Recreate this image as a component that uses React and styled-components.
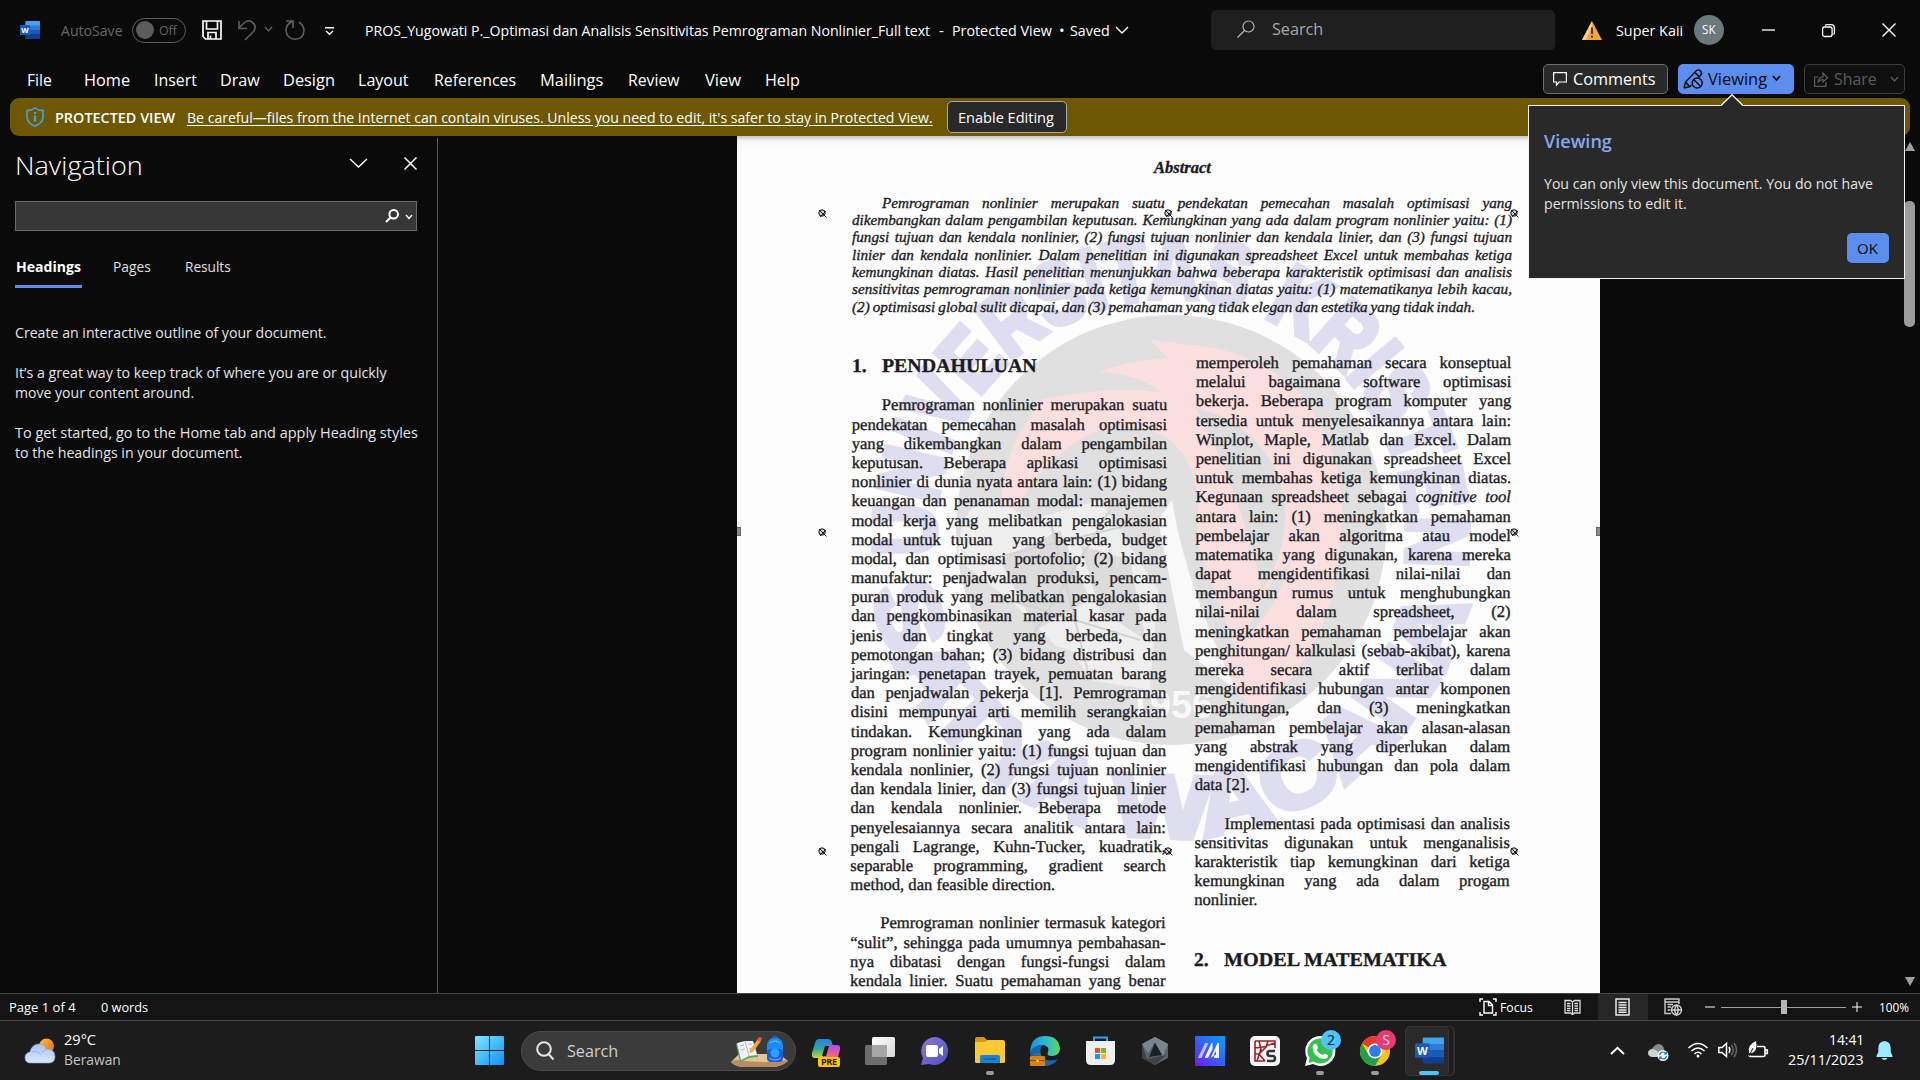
import React, { useLayoutEffect, useRef, useState } from "react";
import styled, { createGlobalStyle } from "styled-components";

const Global = createGlobalStyle`
  html, body { margin: 0; background: #0a0a0a; overflow: hidden; }
  * { box-sizing: border-box; }
`;

const sans = `"Open Sans", "Noto Sans", sans-serif`;
const serif = `"Liberation Serif", serif`;

/* ---------- text helpers ---------- */

const FitBox = styled.span`
  display: block;
  flex: none;
  width: ${(p) => p.$w}px;
  margin-left: ${(p) => p.$ml || 0}px;
  font-size: ${(p) => p.$size || 15}px;
  font-weight: ${(p) => p.$weight || 400};
  color: ${(p) => p.$color || "inherit"};
  text-decoration: ${(p) => (p.$underline ? "underline" : "none")};
  text-underline-offset: 2px;
  white-space: nowrap;
`;
const FitInner = styled.span`
  display: inline-block;
  transform-origin: 0 50%;
  text-decoration: inherit;
`;

function Fit({ w, ml, size, weight, color, underline, children }) {
  const ref = useRef(null);
  const [k, setK] = useState(1);
  useLayoutEffect(() => {
    setK(w / ref.current.offsetWidth);
  }, [w]);
  return (
    <FitBox $w={w} $ml={ml} $size={size} $weight={weight} $color={color} $underline={underline}>
      <FitInner ref={ref} style={{ transform: `scaleX(${k})` }}>{children}</FitInner>
    </FitBox>
  );
}

const LineBox = styled.div`
  height: ${(p) => p.$h}px;
  line-height: ${(p) => p.$h}px;
  padding-left: ${(p) => p.$indent || 0}px;
  white-space: pre;
`;

function Line({ width, h, indent = 0, text, children }) {
  const ref = useRef(null);
  const [ws, setWs] = useState(0);
  useLayoutEffect(() => {
    const gaps = text.split(" ").length - 1;
    const natural = ref.current.getBoundingClientRect().width;
    if (gaps > 0) setWs((width - indent - natural) / gaps);
  }, []);
  return (
    <LineBox $h={h} $indent={indent}>
      <span ref={ref} style={{ wordSpacing: `${ws}px` }}>{children || text}</span>
    </LineBox>
  );
}

const Svg = styled.svg`
  display: block;
  flex: none;
  overflow: visible;
  margin-left: ${(p) => p.$ml || 0}px;
  margin-top: ${(p) => p.$mt || 0}px;
`;
function Icon({ w, h = w, ml, mt, color = "#fff", sw = 1.4, children }) {
  return (
    <Svg width={w} height={h} viewBox={`0 0 ${w} ${h}`} $ml={ml} $mt={mt} fill="none" stroke={color} strokeWidth={sw}>
      {children}
    </Svg>
  );
}

/* ---------- shell ---------- */

const Window = styled.div`
  width: 1920px;
  height: 1080px;
  display: flex;
  flex-direction: column;
  position: relative;
  overflow: hidden;
  background: #0a0a0a;
  color: #fff;
  font-family: ${sans};
  line-height: 20px;
`;
const TitleBar = styled.header`
  display: flex;
  align-items: center;
  height: 60px;
  flex: none;
  padding-left: 20px;
`;
const Toggle = styled.div`
  display: flex;
  align-items: center;
  width: 54px;
  height: 25px;
  margin-left: 9px;
  border: 1.5px solid #5c5c5c;
  border-radius: 13px;
  padding-left: 3px;
`;
const Knob = styled.div`
  width: 18px;
  height: 18px;
  border-radius: 50%;
  background: #5c5c5c;
`;
const SearchField = styled.div`
  display: flex;
  align-items: center;
  width: 344px;
  height: 40px;
  margin-left: 83px;
  padding-left: 26px;
  padding-bottom: 2px;
  border-radius: 5px;
  background: #1f1f1f;
`;
const Avatar = styled.div`
  display: flex;
  align-items: center;
  width: 30px;
  height: 30px;
  margin-left: 11px;
  border-radius: 50%;
  background: #69797e;
`;
const RibbonRow = styled.nav`
  display: flex;
  align-items: center;
  height: 38px;
  flex: none;
`;
const MenuItem = styled.div`
  padding-top: 2px;
`;
const RibbonButton = styled.div`
  display: flex;
  align-items: center;
  width: ${(p) => p.$w}px;
  height: 30px;
  margin-left: ${(p) => p.$ml}px;
  border-radius: 5px;
  border: 1px solid ${(p) => p.$border};
  background: ${(p) => p.$bg};
  color: ${(p) => p.$color};
`;
const WarningBar = styled.div`
  display: flex;
  align-items: center;
  height: 38px;
  flex: none;
  margin: 0 10px;
  padding-left: 16px;
  border-radius: 9px;
  background: #6d5700;
  position: relative;
  z-index: 1;
`;
const EnableButton = styled.div`
  display: flex;
  align-items: center;
  width: 120px;
  height: 32px;
  margin-left: 14px;
  padding-left: 10px;
  border: 1px solid #a8a8a8;
  border-radius: 5px;
  background: #292929;
`;

/* ---------- workspace ---------- */

const Workspace = styled.main`
  display: flex;
  height: 857px;
  flex: none;
`;
const NavPane = styled.aside`
  width: 438px;
  height: 855px;
  margin-top: 2px;
  flex: none;
  border-right: 1px solid #5a5a5a;
  padding: 13px 0 0 15px;
`;
const PaneHead = styled.div`
  display: flex;
  align-items: center;
  height: 28px;
`;
const PaneSearch = styled.div`
  display: flex;
  align-items: center;
  width: 402px;
  height: 30px;
  margin-top: 22px;
  padding-left: 369px;
  border: 1px solid #6b6b6b;
  background: #363636;
`;
const PaneTabs = styled.div`
  display: flex;
  align-items: flex-start;
  margin-top: 26px;
  height: 31px;
  color: #e0e0e0;
`;
const PaneTab = styled.div`
  height: 31px;
  margin-left: ${(p) => p.$ml || 0}px;
  padding: 0 1px;
  border-bottom: 3px solid ${(p) => (p.$active ? "#5b8def" : "transparent")};
  color: ${(p) => (p.$active ? "#fff" : "inherit")};
`;
const PaneText = styled.div`
  margin-top: ${(p) => p.$mt}px;
  color: #e4e4e4;
`;
const Canvas = styled.section`
  flex: 1;
  display: flex;
  padding-left: 298.5px;
`;
const Page = styled.article`
  position: relative;
  width: 863px;
  height: 857px;
  flex: none;
  overflow: hidden;
  padding: 22px 0 0 115.5px;
  background: linear-gradient(#c4c4c4, #f6f6f6 5px, #fdfdfd 12px, #fdfdfd);
  color: #1b1b1f;
  font-family: ${serif};
  -webkit-text-stroke: 0.35px #1b1b1f;
`;
const AbstractTitle = styled.h2`
  position: relative;
  margin: 0 0 15.6px 302px;
  font: italic 700 16px/20px ${serif};
`;
const AbstractText = styled.div`
  position: relative;
  width: 660px;
  font-style: italic;
  font-size: 15.2px;
`;
const Columns = styled.div`
  position: relative;
  display: flex;
  gap: 28.5px;
  margin-top: 37.8px;
  transform: skewX(-0.18deg);
  transform-origin: 0 0;
`;
const Column = styled.div`
  width: 315.5px;
  font-size: 16.6px;
`;
const Heading = styled.h3`
  display: flex;
  height: 24px;
  margin: ${(p) => p.$top}px 0 17px;
  font: 700 19.5px/24px ${serif};
`;
const Gap = styled.div`
  height: 19.2px;
`;
const Seal = styled.svg`
  position: absolute;
  left: 0;
  top: 0;
`;
const Mark = styled.svg`
  position: absolute;
  left: ${(p) => p.$x}px;
  top: ${(p) => p.$y}px;
`;
const Handle = styled.i`
  position: absolute;
  top: 391px;
  left: ${(p) => p.$x}px;
  width: 5px;
  height: 9px;
  background: #8a8a8a;
  border: 1px solid #666;
`;
const ScrollBar = styled.div`
  margin-left: auto;
  width: 21px;
  display: flex;
  flex-direction: column;
  align-items: center;
  padding-top: 6px;
`;
const ScrollThumb = styled.div`
  width: 11px;
  height: 126px;
  margin: 50px 0 650px 0;
  border-radius: 5px;
  background: #9b9b9b;
`;

/* ---------- popup ---------- */

const Popup = styled.div`
  position: absolute;
  z-index: 3;
  left: 1528px;
  top: 105px;
  width: 377px;
  height: 174px;
  padding: 25px 0 0 15px;
  border: 1.5px solid #f2f2f2;
  background: #292929;
`;
const PopupArrow = styled.svg`
  position: absolute;
  left: 192px;
  top: -12px;
`;
const OkButton = styled.div`
  width: 42px;
  height: 30px;
  margin: 20px 0 0 303px;
  padding: 5px 0 0 10px;
  border-radius: 5px;
  background: #5b8def;
  color: #0a0a0a;
`;

/* ---------- bottom bars ---------- */

const StatusBar = styled.footer`
  display: flex;
  align-items: center;
  height: 28px;
  flex: none;
  padding-left: 9px;
  background: #141414;
  border-top: 1px solid #474747;
  border-bottom: 1px solid #474747;
`;
const ActiveView = styled.div`
  display: flex;
  align-items: center;
  width: 50px;
  height: 26px;
  margin-left: 17px;
  padding-left: 17px;
  background: #262626;
`;
const Slider = styled.div`
  display: flex;
  align-items: center;
  width: 125px;
  height: 14px;
  margin-left: 6px;
  background: linear-gradient(#a0a0a0, #a0a0a0) 0 50% / 100% 1px no-repeat;
`;
const SliderThumb = styled.div`
  width: 6px;
  height: 14px;
  margin-left: 60px;
  background: #b5b5b5;
`;
const TaskBar = styled.div`
  display: flex;
  align-items: center;
  height: 59px;
  flex: none;
  padding-left: 25px;
  background: #1c1c1c;
`;
const Stack = styled.div`
  display: flex;
  flex-direction: column;
  padding-bottom: 4px;
  margin-left: ${(p) => p.$ml}px;
`;
const TaskSearch = styled.div`
  display: flex;
  align-items: center;
  width: 275px;
  height: 40px;
  margin-left: 17px;
  padding-left: 14px;
  border-radius: 20px;
  background: #3b3b3b;
  border: 1px solid #4c4c4c;
`;
const TaskButton = styled.div`
  position: relative;
  display: flex;
  align-items: center;
  justify-content: center;
  width: 30px;
  height: 50px;
  flex: none;
  margin-left: ${(p) => p.$ml || 25}px;
  &::after {
    content: "";
    display: ${(p) => (p.$running ? "block" : "none")};
    position: absolute;
    bottom: 1px;
    left: 11px;
    width: 8px;
    height: 4px;
    border-radius: 2px;
    background: #9a9a9a;
  }
`;
const Badge = styled.span`
  position: absolute;
  left: 16px;
  top: 4px;
  width: 20px;
  height: 20px;
  border-radius: 50%;
  background: ${(p) => p.$bg};
  color: ${(p) => p.$color};
  font: 400 14px/20px ${sans};
  text-align: center;
`;
const WordTile = styled.div`
  display: flex;
  align-items: center;
  flex-direction: column;
  width: 44px;
  height: 50px;
  flex: none;
  margin-left: 15px;
  padding: 9px 0 0 4px;
  border: 1px solid #363636;
  border-radius: 5px;
  background: #2a2a2a;
  box-shadow: 5px 0 0 -1px #1c1c1c, 6px 0 0 0 #303030;
`;
const ActiveDot = styled.div`
  width: 20px;
  height: 4px;
  margin-top: 6px;
  border-radius: 2px;
  background: #4cc2ff;
`;

/* ---------- drawings ---------- */

function WordLogo({ s, ml }) {
  return (
    <Svg width={s} height={s} viewBox="0 0 30 30" $ml={ml}>
      <path d="M8 2.5Q8 1.5 9 1.5H29Q30 1.5 30 2.5V9H8Z" fill="#41a5ee" />
      <path d="M8 8.3H30V15H8Z" fill="#2b7cd3" />
      <path d="M8 15H30V22H8Z" fill="#185abd" />
      <path d="M8 21.7H30V27.5Q30 28.5 29 28.5H9Q8 28.5 8 27.5Z" fill="#103f91" />
      <rect x="0" y="7.5" width="15" height="15" rx="1.3" fill="#185abd" />
      <text x="7.5" y="19.2" textAnchor="middle" fontFamily={sans} fontSize="11.5" fontWeight="700" fill="#fff">W</text>
    </Svg>
  );
}
const Chevron = ({ w = 8, h = 4, ml, mt, color, sw }) => (
  <Icon w={w} h={h} ml={ml} mt={mt} color={color} sw={sw}><path d={`M0 0L${w / 2} ${h}L${w} 0`} /></Icon>
);
const NoAnchor = ({ x, y }) => (
  <Mark $x={x} $y={y} width="9" height="9" viewBox="0 0 9 9" fill="none" stroke="#111">
    <circle cx="4" cy="4" r="3.2" fill="#ccc" />
    <path d="M1 1L8.5 8.5M2 8L8 2" strokeWidth=".9" />
  </Mark>
);

function SealDrawing() {
  return (
    <Seal width="863" height="857" viewBox="737 136 863 857" stroke="none">
      <defs>
        <path id="ringTop" d="M 936 556 A 236 236 0 1 1 1406 556" />
        <path id="ringLow" d="M 872 592 A 305 305 0 0 0 1470 592" />
        <clipPath id="disc"><circle cx="1171" cy="530" r="215" /></clipPath>
      </defs>
      <circle cx="1171" cy="530" r="215" fill="#e0e0e0" />
      <g clipPath="url(#disc)">
        <path d="M1098 372Q1130 360 1168 358L1150 340L1215 348Q1290 366 1318 420Q1352 480 1338 560Q1330 650 1258 712L1210 668Q1270 630 1292 560Q1250 600 1240 660L1196 540Q1206 470 1170 440Q1120 410 1070 446Q1030 476 1012 520Q990 500 1016 440L1040 400Q1100 386 1160 392Q1140 374 1098 372Z" fill="#fbdfdf" />
        <path d="M1196 408Q1250 420 1276 470Q1300 530 1262 590Q1240 490 1196 408Z" fill="#dedede" />
        <path d="M1172 500Q1184 580 1236 690L1184 650Q1170 580 1158 520Z" fill="#f9f9f9" />
        <path d="M958 560Q960 470 1030 520L1100 500L1158 590L1150 690L1090 680L1010 600Z" fill="#efefef" />
        <path d="M1000 560L1060 530L1090 600L1036 630ZM1080 545L1130 560L1146 640L1100 610Z" fill="#dcdcdc" />
        <path d="M960 620L1070 650L1140 745H990Z" fill="#e1e1e1" />
        <path d="M985 560L1150 520M1010 600L1140 640M1050 520L1090 680M1110 510L1030 640" stroke="#d2d2d2" strokeWidth="2" fill="none" />
      </g>
      <text x="1171" y="718" textAnchor="middle" fontFamily="Liberation Sans, sans-serif" fontWeight="700" fontSize="38" fill="#f9f9f9">1956</text>
      <g fontFamily="Liberation Sans, sans-serif" fontWeight="700" fontSize="88" fill="#dedef0" stroke="#dedef0" strokeWidth="6">
        <text><textPath href="#ringTop" textLength="795" lengthAdjust="spacingAndGlyphs">UNIVERSITAS KRISTEN</textPath></text>
        <text><textPath href="#ringLow" textLength="825" lengthAdjust="spacingAndGlyphs">SATYA WACANA</textPath></text>
      </g>
    </Seal>
  );
}

/* ---------- content ---------- */

const menu = [
  ["File", 27, 25], ["Home", 32, 46], ["Insert", 24, 43], ["Draw", 23, 40], ["Design", 23, 52], ["Layout", 23, 51],
  ["References", 25, 82], ["Mailings", 24, 63], ["Review", 25, 52], ["View", 25, 36], ["Help", 24, 35],
];

const abstractLines = [
  ["Pemrograman nonlinier merupakan suatu pendekatan pemecahan masalah optimisasi yang", 30],
  ["dikembangkan dalam pengambilan keputusan. Kemungkinan yang ada dalam program nonlinier yaitu: (1)"],
  ["fungsi tujuan dan kendala nonlinier, (2) fungsi tujuan nonlinier dan kendala linier, dan (3) fungsi tujuan"],
  ["linier dan kendala nonlinier. Dalam penelitian ini digunakan spreadsheet Excel untuk membahas ketiga"],
  ["kemungkinan diatas. Hasil penelitian menunjukkan bahwa beberapa karakteristik optimisasi dan analisis"],
  ["sensitivitas pemrograman nonlinier pada ketiga kemungkinan diatas yaitu: (1) matematikanya lebih kacau,"],
  ["(2) optimisasi global sulit dicapai, dan (3) pemahaman yang tidak elegan dan estetika yang tidak indah.", 0, 623],
];

const leftLines = [
  ["Pemrograman nonlinier merupakan suatu", 30],
  ["pendekatan pemecahan masalah optimisasi"],
  ["yang dikembangkan dalam pengambilan"],
  ["keputusan. Beberapa aplikasi optimisasi"],
  ["nonlinier di dunia nyata antara lain: (1) bidang"],
  ["keuangan dan penanaman modal: manajemen"],
  ["modal kerja yang melibatkan pengalokasian"],
  ["modal untuk tujuan  yang berbeda, budget"],
  ["modal, dan optimisasi portofolio; (2) bidang"],
  ["manufaktur: penjadwalan produksi, pencam-"],
  ["puran produk yang melibatkan pengalokasian"],
  ["dan pengkombinasikan material kasar pada"],
  ["jenis dan tingkat yang berbeda, dan"],
  ["pemotongan bahan; (3) bidang distribusi dan"],
  ["jaringan: penetapan trayek, pemuatan barang"],
  ["dan penjadwalan pekerja [1]. Pemrograman"],
  ["disini mempunyai arti memilih serangkaian"],
  ["tindakan. Kemungkinan yang ada dalam"],
  ["program nonlinier yaitu: (1) fungsi tujuan dan"],
  ["kendala nonlinier, (2) fungsi tujuan nonlinier"],
  ["dan kendala linier, dan (3) fungsi tujuan linier"],
  ["dan kendala nonlinier. Beberapa metode"],
  ["penyelesaiannya secara analitik antara lain:"],
  ["pengali Lagrange, Kuhn-Tucker, kuadratik,"],
  ["separable programming, gradient search"],
  ["method, dan feasible direction.", 0, 205],
  null,
  ["Pemrograman nonlinier termasuk kategori", 30],
  ["“sulit”, sehingga pada umumnya pembahasan-"],
  ["nya dibatasi dengan fungsi-fungsi dalam"],
  ["kendala linier. Suatu pemahaman yang benar"],
];

const rightLines = [
  ["memperoleh pemahaman secara konseptual"],
  ["melalui bagaimana software optimisasi"],
  ["bekerja. Beberapa program komputer yang"],
  ["tersedia untuk menyelesaikannya antara lain:"],
  ["Winplot, Maple, Matlab dan Excel. Dalam"],
  ["penelitian ini digunakan spreadsheet Excel"],
  ["untuk membahas ketiga kemungkinan diatas."],
  ["Kegunaan spreadsheet sebagai cognitive tool", 0, null, <>Kegunaan spreadsheet sebagai <em>cognitive tool</em></>],
  ["antara lain: (1) meningkatkan pemahaman"],
  ["pembelajar akan algoritma atau model"],
  ["matematika yang digunakan, karena mereka"],
  ["dapat mengidentifikasi nilai-nilai dan"],
  ["membangun rumus untuk menghubungkan"],
  ["nilai-nilai dalam spreadsheet, (2)"],
  ["meningkatkan pemahaman pembelajar akan"],
  ["penghitungan/ kalkulasi (sebab-akibat), karena"],
  ["mereka secara aktif terlibat dalam"],
  ["mengidentifikasi hubungan antar komponen"],
  ["penghitungan, dan (3) meningkatkan"],
  ["pemahaman pembelajar akan alasan-alasan"],
  ["yang abstrak yang diperlukan dalam"],
  ["mengidentifikasi hubungan dan pola dalam"],
  ["data [2].", 0, 55],
  null,
  ["Implementasi pada optimisasi dan analisis", 30],
  ["sensitivitas digunakan untuk menganalisis"],
  ["karakteristik tiap kemungkinan dari ketiga"],
  ["kemungkinan yang ada dalam progam"],
  ["nonlinier.", 0, 63],
];

const Lines = ({ data, width, h }) =>
  data.map((l, i) =>
    l ? <Line key={i} text={l[0]} indent={l[1] || 0} width={l[2] || width} h={h}>{l[3]}</Line> : <Gap key={i} />
  );

function Title() {
  return (
    <TitleBar>
      <WordLogo s={20} />
      <Fit ml={21} w={62} size={15} color="#666">AutoSave</Fit>
      <Toggle><Knob /><Fit ml={5} w={18} size={13} color="#666">Off</Fit></Toggle>
      <Icon w={20} ml={16} sw={1.7}>
        <path d="M1 1H19V19H3.5L1 16.5ZM4.5 1V9H15.5V1M6 19V12.5H14V19M8.5 15.5V19" />
      </Icon>
      <Icon w={18} h={20} ml={16} color="#5e5e5e" sw={1.6}>
        <path d="M1 1V8.5H9M1 8L6.5 2.5Q10 -.5 14 2Q19.5 6 15.5 11.5L7 20" />
      </Icon>
      <Chevron ml={9} w={7} h={4} color="#5e5e5e" mt={-3} />
      <Icon w={20} ml={13} color="#5e5e5e" sw={1.6}>
        <path d="M1 1H8V8M7.5 1.5Q1 4 1 10.5Q2 19 10 19.3Q18.500 19 19 10.500Q19 5.500 14 2" />
      </Icon>
      <Icon w={9} h={8} ml={20} mt={2}><path d="M0 .7H9M1 4L4.500 7.300L8 4" /></Icon>
      <Fit ml={31} w={565}>PROS_Yugowati P._Optimasi dan Analisis Sensitivitas Pemrograman Nonlinier_Full text</Fit>
      <Fit ml={9} w={5}>-</Fit>
      <Fit ml={8} w={100}>Protected View</Fit>
      <Fit ml={7} w={6}>•</Fit>
      <Fit ml={5} w={40}>Saved</Fit>
      <Chevron ml={6} w={12} h={6} />
      <SearchField>
        <Icon w={18} color="#b5b5b5" sw={1.2}><circle cx="11.500" cy="6.500" r="5.500" /><path d="M7.500 10.500L.5 17.500" /></Icon>
        <Fit ml={17} w={51} size={16.5} color="#a8a8a8">Search</Fit>
      </SearchField>
      <Svg width="20" height="19" viewBox="0 0 20 19" $ml={27}>
        <path d="M10 0L20 19H0Z" fill="#f3a73b" /><path d="M10 0L0 19L4 19L10 5Z" fill="#f9cf8a" />
        <path d="M10 6.500V13M10 14.500V16.700" stroke="#333" strokeWidth="1.800" />
      </Svg>
      <Fit ml={14} w={67}>Super Kaii</Fit>
      <Avatar><Fit ml={8} w={14} size={12.5}>SK</Fit></Avatar>
      <Icon w={13} h={2} ml={38} sw={1.3}><path d="M0 1H13" /></Icon>
      <Icon w={13} ml={47} sw={1.3}>
        <rect x=".6" y="3" width="9.500" height="9.500" rx="2" /><path d="M3 1.500Q4 .6 5 .6H9Q12.400 .6 12.400 4V8.500Q12.400 9.500 11.500 10.500" />
      </Icon>
      <Icon w={14} ml={47}><path d="M.5 .5L13.500 13.500M13.500 .5L.5 13.500" /></Icon>
    </TitleBar>
  );
}

function Ribbon() {
  return (
    <RibbonRow>
      {menu.map(([t, ml, w]) => <MenuItem key={t}><Fit ml={ml} w={w} size={17}>{t}</Fit></MenuItem>)}
      <RibbonButton $w={125} $ml={743} $border="#6e6e6e" $bg="#292929" $color="#fff">
        <Icon w={14} h={14} ml={9} sw={1.2}><path d="M.6 .6H13.400V10H6L3.500 13V10H.6Z" /></Icon>
        <Fit ml={6} w={83} size={17} weight={500}>Comments</Fit>
      </RibbonButton>
      <RibbonButton $w={116} $ml={10} $border="#5b8def" $bg="#5b8def" $color="#0a0a0a">
        <Icon w={20} ml={4} color="#0a0a0a">
          <path d="M1 19L2.500 13L13.500 1.500Q15.500 0 17.500 2Q19.500 4 17.500 6.500L15.500 8.500M1 19L7 17.500L8.500 16M12 3.500L16 7.500M2.500 13L6.500 17.500" />
          <circle cx="14.200" cy="14" r="5" /><path d="M10.700 10.500L17.700 17.500" />
        </Icon>
        <Fit ml={5} w={59} size={17}>Viewing</Fit>
        <Chevron ml={6} w={7} h={4} color="#0a0a0a" mt={-2} sw={1.7} />
      </RibbonButton>
      <RibbonButton $w={101} $ml={10} $border="#3c3c3c" $bg="#0f0f0f" $color="#5c5c5c">
        <Icon w={14} h={15} ml={9} color="#5c5c5c" sw={1.2}>
          <path d="M4.500 5H.6V14.400H12V10M4 10.500Q4.500 5 9 4.800V1L13.500 5.800L9 10V7.500Q6 7.500 4 10.500Z" />
        </Icon>
        <Fit ml={6} w={43} size={17}>Share</Fit>
        <Chevron ml={14} w={7} h={4} color="#5c5c5c" />
      </RibbonButton>
    </RibbonRow>
  );
}

function Navigation() {
  return (
    <NavPane>
      <PaneHead>
        <Fit ml={0} w={128} size={26} weight={300}>Navigation</Fit>
        <Chevron ml={207} w={17} h={8} mt={-4} />
        <Icon w={13} ml={37} mt={-4} sw={1.5}><path d="M.5 .5L12.500 12.500M12.500 .5L.5 12.500" /></Icon>
      </PaneHead>
      <PaneSearch>
        <Icon w={14} ml={0} mt={-1} sw={2}><circle cx="8.700" cy="5.300" r="4.300" /><path d="M5.500 8.500L1 13" /></Icon>
        <Chevron ml={7} w={6} h={3.5} mt={2} />
      </PaneSearch>
      <PaneTabs>
        <PaneTab $active><Fit w={65} size={14.5} weight={700}>Headings</Fit></PaneTab>
        <PaneTab $ml={30}><Fit w={38} size={14.5}>Pages</Fit></PaneTab>
        <PaneTab $ml={32}><Fit w={46} size={14.5}>Results</Fit></PaneTab>
      </PaneTabs>
      <PaneText $mt={34}><Fit w={312}>Create an interactive outline of your document.</Fit></PaneText>
      <PaneText $mt={20}>
        <Fit w={372}>It’s a great way to keep track of where you are or quickly</Fit>
        <Fit w={179}>move your content around.</Fit>
      </PaneText>
      <PaneText $mt={20}>
        <Fit w={403}>To get started, go to the Home tab and apply Heading styles</Fit>
        <Fit w={227}>to the headings in your document.</Fit>
      </PaneText>
    </NavPane>
  );
}

function Document() {
  return (
    <Page>
      <SealDrawing />
      <AbstractTitle><Fit w={57} size={16.5} weight={700}>Abstract</Fit></AbstractTitle>
      <AbstractText><Lines data={abstractLines} width={660} h={17.35} /></AbstractText>
      <Columns>
        <Column>
          <Heading $top={1.4}><Fit w={15} size={19.5} weight={700}>1.</Fit><Fit ml={15} w={155} size={19.5} weight={700}>PENDAHULUAN</Fit></Heading>
          <Lines data={leftLines} width={315.5} h={19.2} />
        </Column>
        <Column>
          <Lines data={rightLines} width={315.5} h={19.2} />
          <Heading $top={38.8}><Fit w={15} size={19.5} weight={700}>2.</Fit><Fit ml={15} w={222} size={19.5} weight={700}>MODEL MATEMATIKA</Fit></Heading>
        </Column>
      </Columns>
      {[[81, 73], [427, 73], [773, 73], [81, 392], [773, 392], [81, 711], [427, 711], [773, 711]].map(([x, y]) => (
        <NoAnchor key={`${x}-${y}`} x={x} y={y} />
      ))}
      <Handle $x={-1} />
      <Handle $x={859} />
    </Page>
  );
}

function Status() {
  return (
    <StatusBar>
      <Fit w={67} size={13}>Page 1 of 4</Fit>
      <Fit ml={25} w={47} size={13}>0 words</Fit>
      <Icon w={18} ml={1331}>
        <path d="M4 1H1V4M14 1H17V4M1 14V17H4M17 14V17H14M5 3.500H10L13.500 7V15H5ZM9.500 3.500V7.500H13.500" />
      </Icon>
      <Fit ml={3} w={33} size={13}>Focus</Fit>
      <Icon w={17} h={16} ml={31} color="#ddd" sw={1.3}>
        <path d="M1 1.500H6.500L8.500 3L10.500 1.500H16V14H10.500L8.500 15.500L6.500 14H1ZM8.500 3V15M3 4.500H6.500M3 7H6.500M3 9.500H6.500M3 11.700H6.500M10.500 4.500H14M10.500 7H14M10.500 9.500H14M10.500 11.700H14" />
      </Icon>
      <ActiveView>
        <Icon w={15} h={18} color="#e8e8e8" sw={1.5}>
          <path d="M1 1H14V17H1ZM3.500 4.500H11.500M3.500 7H11.500M3.500 9.500H11.500M3.500 12H11.500M3.500 14.300H11.500" />
        </Icon>
      </ActiveView>
      <Icon w={18} h={18} ml={16} color="#ccc" sw={1.4}>
        <path d="M7 15.500H1V1H15V6M1 4H15M3.500 6.500H9M3.500 9H7M3.500 12H6.500" />
        <circle cx="12.500" cy="12" r="5" fill="#141414" /><path d="M7.500 12H17.500M12.500 7Q9 12 12.500 17Q16 12 12.500 7" />
      </Icon>
      <Icon w={10} h={2} ml={23} sw={1}><path d="M0 1H10" /></Icon>
      <Slider><SliderThumb /></Slider>
      <Icon w={10} h={10} ml={6} sw={1}><path d="M0 5H10M5 0V10" /></Icon>
      <Fit ml={17} w={30} size={13}>100%</Fit>
    </StatusBar>
  );
}

function Tasks() {
  return (
    <TaskBar>
      <Svg width="30" height="26" viewBox="0 0 30 26">
        <defs>
          <linearGradient id="sun" x2="1" y2="1"><stop stopColor="#fcc03a" /><stop offset="1" stopColor="#f06a10" /></linearGradient>
          <linearGradient id="cl" x2="0" y2="1"><stop stopColor="#a8c4f4" /><stop offset="1" stopColor="#dce8fb" /></linearGradient>
        </defs>
        <circle cx="21.500" cy="8" r="7.500" fill="url(#sun)" />
        <path d="M6 25Q0 25 0 19.500Q0 15 5 14Q7 6 14 6Q20 6.500 21 11Q30 11 30 18.500Q30 25 24 25Z" fill="url(#cl)" stroke="#86a6e6" strokeWidth=".6" />
        <path d="M7 14Q12 12 16 17M17 15Q19 11.500 22 11.500" stroke="#8fb0ee" fill="none" />
      </Svg>
      <Stack $ml={9}>
        <Fit w={32}>29°C</Fit>
        <Fit w={57} color="#c4c4c4">Berawan</Fit>
      </Stack>
      <Svg width="29" height="29" viewBox="0 0 29 29" $ml={354}>
        <defs><linearGradient id="win" x2="1" y2="1"><stop stopColor="#7ce8ff" /><stop offset="1" stopColor="#0a93f5" /></linearGradient></defs>
        <path d="M1 0H14V14H0V1Q0 0 1 0ZM15 0H28Q29 0 29 1V14H15ZM0 15H14V29H1Q0 29 0 28ZM15 15H29V28Q29 29 28 29H15Z" fill="url(#win)" />
      </Svg>
      <TaskSearch>
        <Icon w={18} h={19} color="#e6e6e6" sw={2}><circle cx="8" cy="8" r="6.800" /><path d="M12.500 13L17.500 18.500" /></Icon>
        <Fit ml={13} w={51} size={16.5} color="#cfcfcf">Search</Fit>
        <Svg width="57" height="31" viewBox="0 0 57 31" $ml={113} $mt={1}>
          <path d="M8 18H48L57 25Q50 31 40 31H14Q4 31 0 26Z" fill="#e3c496" /><path d="M0 26Q5 31 14 31H40Q50 31 57 25L54 24Q40 28 4 24Z" fill="#b98e5c" />
          <path d="M5 8L14 5L23 6L27 21L18 22L9 26Z" fill="#4fae62" /><path d="M6 7L14 5L22 5L26 19L18 20L10 24Z" fill="#f2f0f8" /><path d="M14 5L18 20M9 10L13 9M10 14L14 13M17 8H21M18 13L22 12" stroke="#b8b4cc" />
          <path d="M19 14L27 3L30 5L22 16L18.500 17Z" fill="#f5a93b" /><path d="M26 4L28 1Q31 1 31 3L29 6Z" fill="#f0524a" />
          <path d="M41 3Q44 -2 47 3" stroke="#1b6fe0" strokeWidth="1.500" fill="none" /><rect x="36" y="2" width="16" height="24" rx="7" fill="#1a8cf5" /><rect x="36" y="13" width="16" height="13" rx="4" fill="#0d62d8" /><circle cx="44" cy="17" r="4.500" fill="#2ba0ff" /><path d="M39 7Q44 3 49 7" stroke="#75c6ff" fill="none" /><path d="M38 22Q44 26 50 22" stroke="#b49bff" fill="none" />
        </Svg>
      </TaskSearch>
      <TaskButton $ml={15}>
        <Svg width="30" height="28" viewBox="0 0 30 28" $mt={4}>
          <defs>
            <linearGradient id="cp1" x2="0" y2="1"><stop stopColor="#2582e8" /><stop offset=".5" stopColor="#30a6a0" /><stop offset="1" stopColor="#c7d63a" /></linearGradient>
            <linearGradient id="cp2" x2="0" y2="1"><stop stopColor="#b44ae6" /><stop offset=".6" stopColor="#ee5b9a" /><stop offset="1" stopColor="#f5893c" /></linearGradient>
          </defs>
          <path d="M8 0H17Q20 0 21 4L22 7H17L13 17Q12 19 9 19H4Q0 19 1 14L4 4Q5 0 8 0Z" fill="url(#cp1)" />
          <path d="M17 6H26Q30 6 29 11L26 21H12L16 8Z" fill="url(#cp2)" /><path d="M14 7L11 17H15L18 7Z" fill="#1c1c1c" />
          <rect x="7" y="18" width="22" height="10" rx="2" fill="#ffc400" />
          <text x="18" y="26.300" fontFamily={sans} fontWeight="700" fontSize="9" textAnchor="middle" textLength="16" fill="#222">PRE</text>
        </Svg>
      </TaskButton>
      <TaskButton $ml={24}>
        <Svg width="30" height="28" viewBox="0 0 30 28">
          <defs><linearGradient id="tv" x2="1" y2="1"><stop stopColor="#fff" /><stop offset="1" stopColor="#d6d6d6" /></linearGradient></defs>
          <rect x="7" y="0" width="23" height="20" rx="1.500" fill="url(#tv)" /><rect x="0" y="8" width="22" height="20" rx="1.500" fill="#6d6d6d" /><rect x="7" y="8" width="15" height="12" fill="#a6a6a6" />
        </Svg>
      </TaskButton>
      <TaskButton>
        <Svg width="30" height="28" viewBox="0 0 30 28">
          <defs><linearGradient id="ch" x2="1" y2="1"><stop stopColor="#8d78d8" /><stop offset="1" stopColor="#4b53bc" /></linearGradient></defs>
          <path d="M15 0A14 14 0 1 1 9 27L1 28L3 21A14 14 0 0 1 15 0Z" fill="url(#ch)" /><rect x="6" y="8" width="12" height="12" rx="2" fill="#fff" /><path d="M19 12L23 9V19L19 16Z" fill="#fff" />
        </Svg>
      </TaskButton>
      <TaskButton $running>
        <Svg width="30" height="27" viewBox="0 0 30 27">
          <path d="M0 2Q0 0 2 0H9L12 3H20V8H0Z" fill="#d9960c" /><path d="M0 5H10L13 3H28Q30 3 30 5V25Q30 26 28 26H2Q0 26 0 25Z" fill="#fcc934" />
          <path d="M5 26V20Q5 18 7 18H23Q25 18 25 20V26Z" fill="#1583d6" /><path d="M9 22H21" stroke="#0c5fa8" strokeWidth="1.500" />
        </Svg>
      </TaskButton>
      <TaskButton>
        <Svg width="30" height="30" viewBox="0 0 30 30">
          <defs><linearGradient id="ed" x2="1"><stop stopColor="#1d8fe0" /><stop offset=".5" stopColor="#2bb8d4" /><stop offset="1" stopColor="#5fd65a" /></linearGradient></defs>
          <path d="M0 16Q1 0 15 0Q29 0 30 13Q29 20 22 20Q16 20 18 16Q20 11 14 9Q6 8 0 16Z" fill="url(#ed)" />
          <path d="M0 16Q4 8 13 9Q8 13 12 21Q18 27 28 23Q22 31 13 30Q1 28 0 16Z" fill="#1267b8" />
          <rect x="0" y="20" width="15" height="10" rx="1" fill="#d98211" /><path d="M0 24.500H15" stroke="#8a4a05" /><path d="M5 20V18H10V20" stroke="#a55e0a" fill="none" /><rect x="6.500" y="23.500" width="2" height="2.500" fill="#ffe08a" />
        </Svg>
      </TaskButton>
      <TaskButton>
        <Svg width="29" height="30" viewBox="0 0 29 30">
          <path d="M8 6V1.500H21V6" stroke="#28a8ea" strokeWidth="2" fill="none" /><path d="M0 5H29V24Q29 29 24 29H5Q0 29 0 24Z" fill="#efefef" />
          <path d="M9 12H14V17H9Z" fill="#f25022" /><path d="M15 12H20V17H15Z" fill="#7fba00" /><path d="M9 18H14V23H9Z" fill="#00a4ef" /><path d="M15 18H20V23H15Z" fill="#ffb900" />
        </Svg>
      </TaskButton>
      <TaskButton>
        <Svg width="26" height="28" viewBox="0 0 26 28">
          <path d="M13 0L26 7V21L13 28L0 21V7Z" fill="#59636c" /><path d="M13 0L26 7L21 20L13 5L6 16L0 7Z" fill="#7b858e" /><path d="M13 6L20 18L7 20Z" fill="#1b2025" /><path d="M0 7L5 22L24 18L13 28L0 21Z" fill="#3b444c" />
        </Svg>
      </TaskButton>
      <TaskButton>
        <Svg width="30" height="30" viewBox="0 0 30 30">
          <defs><linearGradient id="as" x1="0" y1="1" x2="1" y2="0"><stop stopColor="#6a1df2" /><stop offset="1" stopColor="#00a3ff" /></linearGradient></defs>
          <rect width="30" height="30" fill="url(#as)" />
          <path d="M3 22L10 7H13.500L6.500 22Z" fill="#b9c4ff" /><path d="M9.500 22L16.500 7H17.500V13L13 22ZM15.500 22L22.500 7H24V22H21V14.500L18.500 20Z" fill="#eef2ff" /><circle cx="20.500" cy="20.500" r="1.500" fill="#fff" />
        </Svg>
      </TaskButton>
      <TaskButton>
        <Svg width="30" height="30" viewBox="0 0 30 30">
          <rect width="30" height="30" rx="5" fill="#f8f8f8" />
          <path d="M5 5H25V12M5 5V25H15M5 12L13 11L25 7M9 5L11 13L7 25M18 5L16 11L9 18L15 25M5 18L9 18" stroke="#9c1f26" strokeWidth="1.600" fill="none" />
          <path d="M25 15H20Q17.500 15 17.500 17.500Q17.500 20 20 20H22.500Q25 20 25 22.500Q25 25 22.500 25H17" stroke="#333" strokeWidth="2.600" fill="none" />
        </Svg>
      </TaskButton>
      <TaskButton $running>
        <Svg width="30" height="30" viewBox="0 0 30 30">
          <path d="M15 0A15 15 0 1 1 8 28L0 30L2 22A15 15 0 0 1 15 0Z" fill="#fff" /><path d="M15 2.500A12.500 12.500 0 1 1 8.500 25.500L3.500 27L4.700 22A12.500 12.500 0 0 1 15 2.500Z" fill="#35c04f" />
          <path d="M9 8Q11 7 12 9L13 12L11.500 14Q14 18 18 19L19.500 17.500Q22 18 23 19.500Q23 23 18.500 23Q8 21 7.500 11Q8 9 9 8Z" fill="#fff" />
        </Svg>
        <Badge $bg="#4cc2ff" $color="#111">2</Badge>
      </TaskButton>
      <TaskButton $running>
        <Svg width="30" height="30" viewBox="0 0 30 30">
          <circle cx="15" cy="15" r="15" fill="#fcc31e" /><path d="M15 15L2 7.500A15 15 0 0 1 28 7.500H15Z" fill="#e33b2e" /><path d="M2 7.500A15 15 0 0 0 15 30L21.500 18.700L15 15L8.500 18.700Z" fill="#23a047" />
          <circle cx="15" cy="15" r="7.500" fill="#fff" /><circle cx="15" cy="15" r="5.900" fill="#2f7be8" />
        </Svg>
        <Badge $bg="#e83a72" $color="#ffd5e2">S</Badge>
      </TaskButton>
      <WordTile><WordLogo s={29} /><ActiveDot /></WordTile>
      <Icon w={13} h={7} ml={162} sw={2}><path d="M0 7L6.500 .8L13 7" /></Icon>
      <Svg width="21" height="17" viewBox="0 0 21 17" $ml={24} $mt={4}>
        <path d="M5 13Q0 13 0 8.500Q1 5 4 5Q7 0 11 0Q16 1 16 6L10 13Z" fill="#8b8b8b" /><path d="M4 13Q0 12 0 8.500Q1 5 5 5Q9 6 12 10L10 13Z" fill="#cfcfcf" />
        <circle cx="15" cy="11.500" r="5.500" fill="#fff" /><path d="M11.500 11Q12.500 8 15 8Q17 8 18 9.700M18.500 12Q17.500 15 15 15Q13 15 12 13.300M18.300 7.500V10H16M11.700 15.500V13H14" stroke="#1677d2" strokeWidth="1.200" fill="none" />
      </Svg>
      <Icon w={20} h={15} ml={19} mt={-1} sw={1.6}>
        <path d="M.5 5Q10 -4 19.500 5M3.500 8Q10 2 16.500 8M6.500 11Q10 7.500 13.500 11" /><circle cx="10" cy="13" r="1.500" fill="#fff" stroke="none" />
      </Icon>
      <Icon w={20} h={16} ml={10} mt={-1} sw={1.5}>
        <path d="M.8 5.500H4L8.500 1.500V14.500L4 10.500H.8ZM11 5Q12.800 8 11 11" /><path d="M13.500 3Q17 8 13.500 13M16 1Q21 8 16 15" stroke="#666" />
      </Icon>
      <Icon w={20} h={17} ml={10} mt={-3} sw={1.6}>
        <path d="M9 5.500H15.500Q17 5.500 17 7V14Q17 15.500 15.500 15.500H3.500Q1 15.500 1 14M17.500 9H19.300V12.500H17.500" />
        <path d="M1 12Q-1 4 8 0Q9.500 8 6 11Q4 12.500 1 12Z" fill="#fff" stroke="none" /><path d="M1 15L5 7" stroke="#1c1c1c" strokeWidth="1" />
      </Icon>
      <Stack $ml={20}>
        <Fit ml={41} w={35}>14:41</Fit>
        <Fit w={76}>25/11/2023</Fit>
      </Stack>
      <Svg width="17" height="19" viewBox="0 0 17 19" $ml={12}>
        <path d="M8.500 0Q14.500 .5 14.700 7V11L16.500 15V16H.5V15L2.300 11V7Q2.500 .5 8.500 0ZM5.500 17H11.500Q10.500 19 8.500 19Q6.500 19 5.500 17Z" fill="#99ebff" />
      </Svg>
    </TaskBar>
  );
}

export default function App() {
  return (
    <Window>
      <Global />
      <Title />
      <Ribbon />
      <WarningBar>
        <Icon w={18} h={20} color="#4aa3df" sw={1.6}>
          <path d="M9 1Q12 3.500 17 3.500V9.500Q17 16 9 19Q1 16 1 9.500V3.500Q6 3.500 9 1Z" /><path d="M9 5V7M9 8.500V14.500" strokeWidth="2.300" />
        </Icon>
        <Fit ml={11} w={120} weight={600}>PROTECTED VIEW</Fit>
        <Fit ml={12} w={746} underline>
          Be careful—files from the Internet can contain viruses. Unless you need to edit, it's safer to stay in Protected View.
        </Fit>
        <EnableButton><Fit w={96}>Enable Editing</Fit></EnableButton>
      </WarningBar>
      <Workspace>
        <Navigation />
        <Canvas>
          <Document />
          <ScrollBar>
            <Svg width="10" height="9" viewBox="0 0 10 9"><path d="M5 0L10 9H0Z" fill="#a0a0a0" /></Svg>
            <ScrollThumb />
            <Svg width="10" height="9" viewBox="0 0 10 9"><path d="M5 9L10 0H0Z" fill="#a0a0a0" /></Svg>
          </ScrollBar>
        </Canvas>
      </Workspace>
      <Status />
      <Tasks />
      <Popup>
        <PopupArrow width="22" height="13" viewBox="0 0 22 13"><path d="M0 13V12L11 .8L22 12V13Z" fill="#292929" /><path d="M0 11.500L11 .8L22 11.500" fill="none" stroke="#f2f2f2" strokeWidth="1.400" /></PopupArrow>
        <Fit w={68} size={17.5} weight={600} color="#86a9f0">Viewing</Fit>
        <PaneText $mt={22}>
          <Fit w={329}>You can only view this document. You do not have</Fit>
          <Fit w={143}>permissions to edit it.</Fit>
        </PaneText>
        <OkButton><Fit w={21}>OK</Fit></OkButton>
      </Popup>
    </Window>
  );
}
